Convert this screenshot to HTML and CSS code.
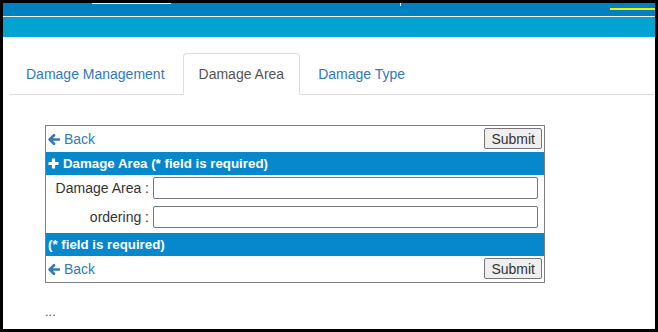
FILE: index.html
```html
<!DOCTYPE html>
<html lang="en">
<head>
<meta charset="utf-8">
<title>Damage Area</title>
<link rel="stylesheet" href="styles.css">
</head>
<body>
<div class="screen">
  <header class="topbar">
    <div class="bar-dark">
      <span class="mark mark-white"></span>
      <span class="mark mark-tick"></span>
      <span class="mark mark-yellow"></span>
    </div>
    <div class="bar-light"></div>
  </header>
  <main class="content">
    <ul class="tabs">
      <li class="tab"><a href="#">Damage Management</a></li>
      <li class="tab active"><a href="#">Damage Area</a></li>
      <li class="tab"><a href="#">Damage Type</a></li>
    </ul>
    <form class="panel">
      <div class="toolbar">
        <a class="back" href="#"><svg class="icon-arrow" viewBox="0 0 12 11" width="12" height="11"><path d="M6 1.2 L1.6 5.5 L6 9.8 M2.2 5.5 H11.4" fill="none" stroke="#337ab7" stroke-width="2.6" stroke-linecap="round" stroke-linejoin="round"/></svg>Back</a>
        <button type="button" class="btn">Submit</button>
      </div>
      <div class="band"><svg class="icon-plus" viewBox="0 0 11 11" width="11" height="11"><path d="M3.9 0.5 H7.1 V3.9 H10.5 V7.1 H7.1 V10.5 H3.9 V7.1 H0.5 V3.9 H3.9 Z" fill="#fff"/></svg>Damage Area (* field is required)</div>
      <div class="field"><label class="label">Damage Area :</label><input class="input" type="text"></div>
      <div class="field"><label class="label">ordering :</label><input class="input" type="text"></div>
      <div class="band">(* field is required)</div>
      <div class="toolbar">
        <a class="back" href="#"><svg class="icon-arrow" viewBox="0 0 12 11" width="12" height="11"><path d="M6 1.2 L1.6 5.5 L6 9.8 M2.2 5.5 H11.4" fill="none" stroke="#337ab7" stroke-width="2.6" stroke-linecap="round" stroke-linejoin="round"/></svg>Back</a>
        <button type="button" class="btn">Submit</button>
      </div>
    </form>
    <p class="more">...</p>
  </main>
</div>
</body>
</html>
```

FILE: styles.css
```css
* { box-sizing: border-box; }
html, body { margin: 0; padding: 0; }
body {
  font-family: "Liberation Sans", Arial, sans-serif;
  font-size: 14px;
  color: #333;
  background: #fff;
}
.screen {
  width: 658px;
  height: 332px;
  border: 3px solid #000;
  overflow: hidden;
  background: #fff;
}
.topbar { display: flex; flex-direction: column; }
.bar-dark {
  position: relative;
  height: 14px;
  background: #0181c1;
  border-bottom: 1px solid #fff;
}
.mark { position: absolute; display: block; }
.mark-white { left: 89px; top: 0; width: 79px; height: 1px; background: #e8f4fa; }
.mark-tick { left: 397px; top: 0; width: 1px; height: 3px; background: #e8f4fa; }
.mark-yellow { right: 0; top: 5px; width: 45px; height: 2px; background: #f5ee00; }
.bar-light { height: 20px; background: #02a3d1; }

.content { padding: 16px 0 0 7px; }
.tabs {
  list-style: none;
  margin: 0;
  padding: 0;
  display: flex;
  border-bottom: 1px solid #ddd;
}
.tab { margin-bottom: -1px; margin-right: 2px; }
.tab a {
  display: block;
  padding: 10px 15px;
  line-height: 20px;
  border: 1px solid transparent;
  border-radius: 4px 4px 0 0;
  color: #337ab7;
  text-decoration: none;
}
.tab.active a {
  color: #555;
  background: #fff;
  border-color: #ddd #ddd transparent;
}

.panel {
  width: 500px;
  margin: 30px 0 0 35px;
  border: 1px solid #808080;
  display: flex;
  flex-direction: column;
}
.toolbar {
  height: 26px;
  display: flex;
  justify-content: space-between;
  align-items: flex-start;
  padding: 2px 2px 0 2px;
}
.back {
  display: flex;
  align-items: center;
  gap: 4px;
  height: 22px;
  color: #337ab7;
  text-decoration: none;
}
.btn {
  height: 21px;
  padding: 1px 6px;
  font-family: "Liberation Sans", Arial, sans-serif;
  font-size: 14px;
  color: #333;
  background: #efefef;
  border: 1px solid #767676;
  border-radius: 2px;
  line-height: 16px;
}
.band {
  height: 23px;
  background: #0788cd;
  color: #fff;
  font-weight: bold;
  font-size: 13.3px;
  display: flex;
  align-items: center;
  gap: 4px;
  padding-left: 2px;
}
.field {
  height: 29px;
  display: flex;
  align-items: flex-start;
  padding-top: 2px;
}
.label {
  width: 103px;
  text-align: right;
  line-height: 22px;
  color: #333;
}
.input {
  flex: 1;
  height: 22px;
  margin: 0 6px 0 4px;
  border: 1px solid #767676;
  border-radius: 2px;
  padding: 1px 2px;
  font-family: "Liberation Sans", Arial, sans-serif;
  font-size: 13px;
}
.more {
  margin: 19px 0 0 35px;
  line-height: 20px;
  font-size: 13px;
  color: #555;
}
```
